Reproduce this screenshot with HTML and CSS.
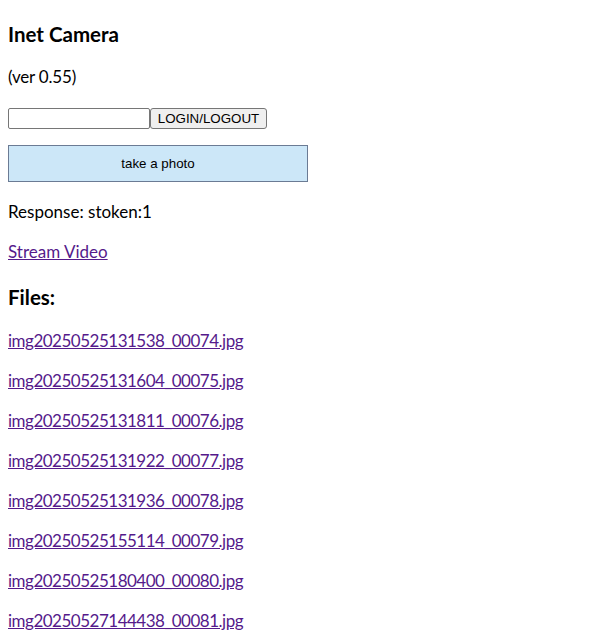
FILE: index.html
```html
<!DOCTYPE html>
<html>
<head>
<meta charset="utf-8">
<link rel="stylesheet" href="styles.css">
</head>
<body>
<h3 class="title">Inet Camera</h3>
<p class="ver">(ver 0.55)</p>
<div class="login">
  <input class="token" type="text">
  <button class="login-btn">LOGIN/LOGOUT</button>
</div>
<button class="photo-btn">take a photo</button>
<p class="resp">Response: stoken:1</p>
<p class="stream"><a href="#">Stream Video</a></p>
<h3 class="files">Files:</h3>
<ul class="list">
  <li><a href="#">img20250525131538_00074.jpg</a></li>
  <li><a href="#">img20250525131604_00075.jpg</a></li>
  <li><a href="#">img20250525131811_00076.jpg</a></li>
  <li><a href="#">img20250525131922_00077.jpg</a></li>
  <li><a href="#">img20250525131936_00078.jpg</a></li>
  <li><a href="#">img20250525155114_00079.jpg</a></li>
  <li><a href="#">img20250525180400_00080.jpg</a></li>
  <li><a href="#">img20250527144438_00081.jpg</a></li>
</ul>
</body>
</html>
```
FILE: styles.css
```css
html, body { background: #fff; }
body {
  margin: 0;
  padding: 0 8px;
  font-family: Lato, "Noto Sans", sans-serif;
  font-size: 17px;
  line-height: 24px;
  color: #000;
}
a { color: #551a8b; text-decoration: underline; }
.title {
  margin: 22px 0 0;
  font-size: 20.5px;
  line-height: 24px;
  font-weight: 700;
}
.ver { margin: 19px 0 0; letter-spacing: -0.2px; }
.login {
  display: flex;
  align-items: flex-start;
  margin-top: 19px;
  height: 21px;
}
.token {
  box-sizing: border-box;
  width: 142px;
  height: 21px;
  margin: 0;
  padding: 1px 2px;
  border: 1px solid #767676;
  border-radius: 2px;
  font: 13.33px "Liberation Sans", Arial, sans-serif;
}
.login-btn {
  box-sizing: border-box;
  height: 21px;
  width: 117px;
  margin: 0;
  padding: 0 6px;
  background: #efefef;
  border: 1px solid #767676;
  border-radius: 3px;
  font: 13.33px "Liberation Sans", Arial, sans-serif;
  color: #000;
}
.photo-btn {
  display: block;
  box-sizing: border-box;
  width: 300px;
  height: 37px;
  margin: 16px 0 0;
  background: #cce7f8;
  border: 1px solid #6b7b94;
  font: 13.33px "Liberation Sans", Arial, sans-serif;
  color: #000;
}
.resp { margin: 18px 0 0; }
.stream { margin: 16px 0 0; }
.files {
  margin: 21px 0 0;
  font-size: 20.5px;
  line-height: 24px;
  font-weight: 700;
}
.list { list-style: none; margin: 20px 0 0; padding: 0; letter-spacing: -0.5px; }
.list li { margin: 0 0 16px; }
```
